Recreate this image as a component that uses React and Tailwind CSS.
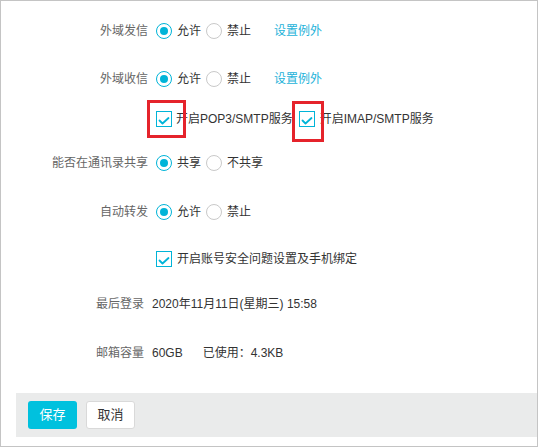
import React, { useState } from 'react';

const font = { fontFamily: '"Liberation Sans", "Noto Sans CJK SC", sans-serif' };

const Radio = ({ checked, label, onClick }) => (
  <button type="button" onClick={onClick} className="flex items-center cursor-pointer">
    <span
      className={`w-4 h-4 rounded-full flex items-center justify-center border ${
        checked ? 'border-[#00b4d8] border-[1.5px]' : 'border-[#c9c9c9] bg-white'
      }`}
    >
      {checked && <span className="w-2 h-2 rounded-full bg-[#00b4d8]" />}
    </span>
    <span className="ml-[5px] text-[#333]">{label}</span>
  </button>
);

const Check = ({ checked, onClick }) => (
  <span
    onClick={onClick}
    className="w-4 h-4 border border-[#00b4d8] bg-white flex items-center justify-center cursor-pointer"
  >
    {checked && (
      <svg width="14" height="14" viewBox="0 0 14 14" fill="none">
        <path d="M2.5 8.5 L5.5 11.5 L11.5 6" stroke="#00b4d8" strokeWidth="1.8" strokeLinecap="round" strokeLinejoin="round" />
      </svg>
    )}
  </span>
);

const Label = ({ children }) => (
  <div className="w-[147px] pr-0 text-right text-[#666] shrink-0">{children}</div>
);

const RadioRow = ({ label, options, value, setValue, link, className }) => (
  <div className={`flex items-center h-6 ${className}`}>
    <Label>{label}</Label>
    <div className="flex items-center ml-2 gap-[5px]">
      {options.map((o, i) => (
        <Radio key={o} label={o} checked={value === i} onClick={() => setValue(i)} />
      ))}
    </div>
    {link && <a className="ml-[23px] text-[#1db2d9] cursor-pointer">{link}</a>}
  </div>
);

export default function App() {
  const [send, setSend] = useState(0);
  const [recv, setRecv] = useState(0);
  const [share, setShare] = useState(0);
  const [fwd, setFwd] = useState(0);
  const [pop, setPop] = useState(true);
  const [imap, setImap] = useState(true);
  const [safe, setSafe] = useState(true);

  return (
    <div style={font} className="w-[538px] h-[447px] border border-[#c4c4c4] bg-white text-[12px] flex flex-col">
      <RadioRow className="mt-[18px]" label="外域发信" options={['允许', '禁止']} value={send} setValue={setSend} link="设置例外" />
      <RadioRow className="mt-6" label="外域收信" options={['允许', '禁止']} value={recv} setValue={setRecv} link="设置例外" />

      <div className="flex items-center h-6 mt-4 pl-[155px]">
        <span className="relative">
          <Check checked={pop} onClick={() => setPop(!pop)} />
          <span className="absolute left-[-9px] top-[-11px] w-[39px] h-[38px] border-[3px] border-[#e5232b] pointer-events-none" />
        </span>
        <span className="ml-[4px] text-[#333]">开启POP3/SMTP服务</span>
        <span className="relative ml-[6px]">
          <Check checked={imap} onClick={() => setImap(!imap)} />
          <span className="absolute left-[-7px] top-[-10px] w-[32px] h-[41px] border-[3px] border-[#e5232b] pointer-events-none" />
        </span>
        <span className="ml-[5px] text-[#333]">开启IMAP/SMTP服务</span>
      </div>

      <RadioRow className="mt-5" label="能否在通讯录共享" options={['共享', '不共享']} value={share} setValue={setShare} />
      <RadioRow className="mt-[25px]" label="自动转发" options={['允许', '禁止']} value={fwd} setValue={setFwd} />

      <div className="flex items-center h-6 mt-[23px] pl-[155px]">
        <Check checked={safe} onClick={() => setSafe(!safe)} />
        <span className="ml-[5px] text-[#333]">开启账号安全问题设置及手机绑定</span>
      </div>

      <div className="flex items-center h-6 mt-[21px]">
        <div className="w-[143px] text-right text-[#666]">最后登录</div>
        <div className="ml-2 text-[#333]">2020年11月11日(星期三) 15:58</div>
      </div>

      <div className="flex items-center h-6 mt-[25px]">
        <div className="w-[143px] text-right text-[#666]">邮箱容量</div>
        <div className="ml-2 text-[#333]">60GB</div>
        <div className="ml-5 text-[#333]">已使用：4.3KB</div>
      </div>

      <div className="mt-[28px] ml-[15px] h-[44px] bg-[#eaebeb] flex items-center pl-3 gap-[9px]">
        <button className="w-[49px] h-7 rounded-[3px] bg-[#00c1de] text-white text-[13px]">保存</button>
        <button className="w-[49px] h-7 rounded-[3px] bg-white border border-[#d9d9d9] text-[#333] text-[13px]">取消</button>
      </div>
    </div>
  );
}
